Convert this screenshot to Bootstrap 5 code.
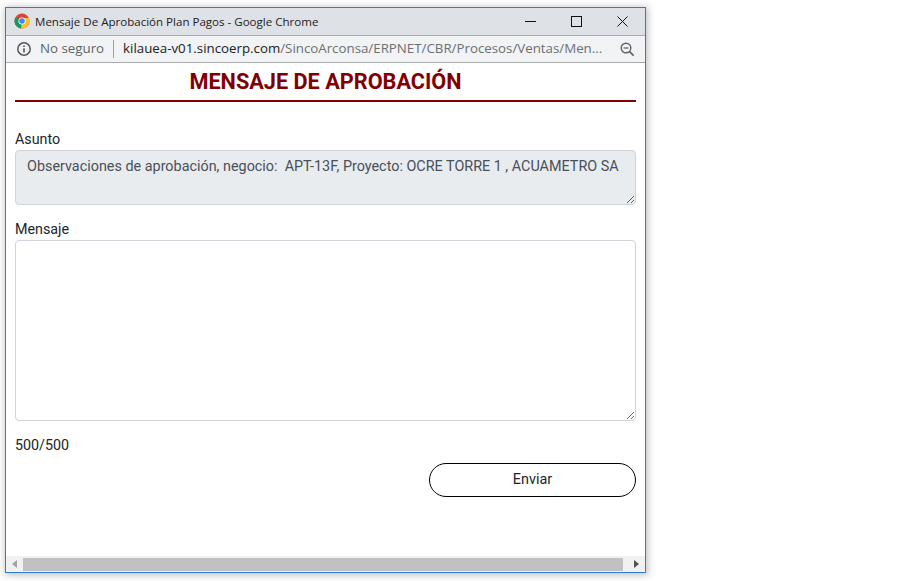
<!DOCTYPE html>
<html lang="es">
<head>
  <meta charset="UTF-8">
  <title>Mensaje De Aprobación Plan Pagos</title>
  <link href="https://cdn.jsdelivr.net/npm/bootstrap@5.3.0/dist/css/bootstrap.min.css" rel="stylesheet">
  <style>
    html, body { height: 100%; }
    body { background: #fff; overflow: hidden; font-family: Roboto, sans-serif; color: #212529; }
    .chrome-win {
      position: absolute; left: 5px; top: 7px; width: 641px; height: 566px;
      border: 1px solid #2a7fd0; background: #fff;
      box-shadow: 1px 1px 7px 1px rgba(0,0,0,.25);
    }
    .title-bar { height: 28px; background: #dee1e6; border-bottom: 1px solid #a9abad; font-family: "Open Sans", "Noto Sans", sans-serif; font-size: 11.55px; color: #222; padding-left: 8px; }
    .chrome-logo { margin-bottom: 2px; }
    .title-text { margin-left: 5px; }
    .win-btn { width: 46px; height: 27px; }
    .addr-bar { height: 27px; background: #f1f3f4; border-bottom: 1px solid #a9abad; font-family: "Open Sans", "Noto Sans", sans-serif; font-size: 13.3px; padding-left: 11px; padding-right: 10px; }
    .not-safe { color: #5f6368; margin-left: 9px; }
    .addr-sep { width: 1px; height: 18px; background: #9aa0a6; margin: 0 9px; }
    .addr-host { color: #202124; }
    .addr-path { color: #6b7074; }
    .page-body { height: 493px; padding: 0 9px; }
    .page-head { color: #800000; font-size: 21.7px; font-weight: 700; text-align: center; line-height: 37px; height: 39px; border-bottom: 2px solid #800000; margin-bottom: 27px; }
    .fld-label { font-size: 14.3px; line-height: 20px; margin-bottom: 1px; display: block; }
    .msg-area { font-family: Roboto, sans-serif; font-size: 14.38px; border-color: #ced4da; border-radius: 4px; padding: 5px 11px; display: block; }
    .msg-area[disabled] { background: #e9ecef; color: #495057; opacity: 1; }
    .asunto-box { height: 55px; margin-bottom: 14px; }
    .mensaje-box { height: 181px; }
    .char-count { font-size: 14.3px; line-height: 20px; margin-top: 14px; }
    .send-btn { width: 207px; height: 34px; border: 1px solid #000; border-radius: 17px; background: #fff; color: #212529; font-size: 14.4px; padding: 0; margin-top: 8px; }
    .scroll-track { height: 16px; background: #f1f1f1; }
    .scroll-arrow { width: 17px; height: 16px; }
    .scroll-thumb { height: 13px; background: #c1c1c1; margin-right: 5px; }
  </style>
</head>
<body>

  <div class="chrome-win d-flex flex-column">
    <!-- title bar -->
    <div class="title-bar d-flex align-items-center">
      <svg width="16" height="16" viewBox="0 0 16 16" class="chrome-logo flex-shrink-0">
        <circle cx="8" cy="8" r="7.5" fill="#db4437"/>
        <path d="M8 8 L1.5 4.2 A7.5 7.5 0 0 0 7 15.4 Z" fill="#0f9d58"/>
        <path d="M8 8 L7 15.4 A7.5 7.5 0 0 0 14.9 5 L8 5 Z" fill="#fbc02d"/>
        <circle cx="8" cy="8" r="3.6" fill="#fff"/>
        <circle cx="8" cy="8" r="2.8" fill="#4285f4"/>
      </svg>
      <span class="title-text flex-grow-1">Mensaje De Aprobación Plan Pagos - Google Chrome</span>
      <div class="win-btn d-flex align-items-center justify-content-center">
        <svg width="11" height="11" viewBox="0 0 11 11"><path d="M0 5.5H11" stroke="#111" fill="none"/></svg>
      </div>
      <div class="win-btn d-flex align-items-center justify-content-center">
        <svg width="11" height="11" viewBox="0 0 11 11"><rect x=".5" y=".5" width="10" height="10" stroke="#111" fill="none"/></svg>
      </div>
      <div class="win-btn d-flex align-items-center justify-content-center">
        <svg width="11" height="11" viewBox="0 0 11 11"><path d="M.5 .5L10.5 10.5M10.5 .5L.5 10.5" stroke="#111" fill="none"/></svg>
      </div>
    </div>

    <!-- address bar -->
    <div class="addr-bar d-flex align-items-center">
      <svg width="14" height="14" viewBox="0 0 14 14" class="flex-shrink-0">
        <circle cx="7" cy="7" r="6.2" fill="none" stroke="#55595d" stroke-width="1.5"/>
        <path d="M7 6.2V10.4" stroke="#55595d" stroke-width="1.6"/>
        <path d="M7 3.4V5" stroke="#55595d" stroke-width="1.6"/>
      </svg>
      <span class="not-safe">No seguro</span>
      <span class="addr-sep"></span>
      <span class="flex-grow-1 text-nowrap"><span class="addr-host">kilauea-v01.sincoerp.com</span><span class="addr-path">/SincoArconsa/ERPNET/CBR/Procesos/Ventas/Men...</span></span>
      <svg width="15" height="15" viewBox="0 0 15 15" class="flex-shrink-0">
        <circle cx="6" cy="6" r="4.8" fill="none" stroke="#5f6368" stroke-width="1.4"/>
        <path d="M3.6 6H8.4" stroke="#5f6368" stroke-width="1.3"/>
        <path d="M9.6 9.6L13.6 13.6" stroke="#5f6368" stroke-width="1.7"/>
      </svg>
    </div>

    <!-- page -->
    <div class="page-body">
      <div class="page-head">MENSAJE DE APROBACIÓN</div>
      <form>
        <label class="fld-label" for="asunto">Asunto</label>
        <textarea id="asunto" class="form-control msg-area asunto-box" disabled>Observaciones de aprobación, negocio:  APT-13F, Proyecto: OCRE TORRE 1 , ACUAMETRO SA</textarea>
        <label class="fld-label" for="mensaje">Mensaje</label>
        <textarea id="mensaje" class="form-control msg-area mensaje-box"></textarea>
        <div class="char-count">500/500</div>
        <div class="d-flex justify-content-end">
          <button type="button" class="btn send-btn">Enviar</button>
        </div>
      </form>
    </div>

    <!-- horizontal scrollbar -->
    <div class="scroll-track d-flex align-items-center mt-auto">
      <div class="scroll-arrow d-flex align-items-center justify-content-center">
        <svg width="5" height="8" viewBox="0 0 5 8"><path d="M5 0V8L0 4Z" fill="#a3a3a3"/></svg>
      </div>
      <div class="scroll-thumb flex-grow-1"></div>
      <div class="scroll-arrow d-flex align-items-center justify-content-center">
        <svg width="5" height="8" viewBox="0 0 5 8"><path d="M0 0V8L5 4Z" fill="#505050"/></svg>
      </div>
    </div>
  </div>

  <script src="https://cdn.jsdelivr.net/npm/bootstrap@5.3.0/dist/js/bootstrap.bundle.min.js"></script>
</body>
</html>
